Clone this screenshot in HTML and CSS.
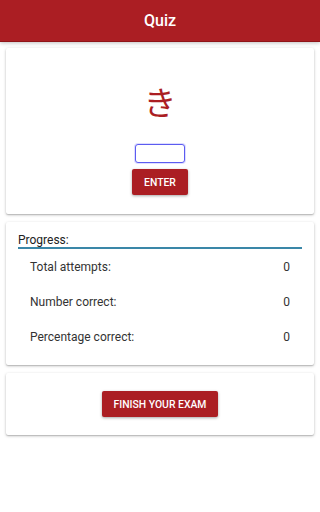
FILE: index.html
```html
<!DOCTYPE html>
<html>
<head>
<meta charset="utf-8">
<meta name="viewport" content="width=device-width, initial-scale=1">
<link rel="stylesheet" href="styles.css">
</head>
<body>
<header class="topbar">Quiz</header>
<main class="content">
  <section class="card quiz-card">
    <div class="kana">き</div>
    <input class="answer" type="text">
    <button class="btn">ENTER</button>
  </section>
  <section class="card progress-card">
    <div class="progress-title">Progress:</div>
    <div class="stat-row"><span>Total attempts:</span><span>0</span></div>
    <div class="stat-row"><span>Number correct:</span><span>0</span></div>
    <div class="stat-row"><span>Percentage correct:</span><span>0</span></div>
  </section>
  <section class="card finish-card">
    <button class="btn">FINISH YOUR EXAM</button>
  </section>
</main>
</body>
</html>
```

FILE: styles.css
```css
* { box-sizing: border-box; }
body {
  margin: 0;
  background: #fff;
  font-family: Roboto, "Noto Sans", "Noto Sans CJK JP", sans-serif;
  color: #222;
}
.topbar {
  height: 41px;
  background: #ab1e23;
  color: #fff;
  font-size: 16px;
  font-weight: 500;
  display: flex;
  align-items: center;
  justify-content: center;
  box-shadow: 0 1px 0 #8f1418, 0 2px 4px rgba(0,0,0,0.25);
  position: relative;
}
.content {
  padding: 7px 6px;
  display: flex;
  flex-direction: column;
  gap: 8px;
}
.card {
  background: #fff;
  border-radius: 2px;
  box-shadow: 0 1px 3px rgba(0,0,0,0.25), 0 1px 1px rgba(0,0,0,0.12);
}
.quiz-card {
  height: 166px;
  display: flex;
  flex-direction: column;
  align-items: center;
  padding-top: 28px;
}
.kana {
  font-family: "Noto Sans CJK JP", sans-serif;
  font-size: 33px;
  line-height: 50px;
  color: #ab1e23;
}
.answer {
  margin-top: 18px;
  width: 50px;
  height: 19px;
  border: 1px solid #5c5cf0;
  border-radius: 3px;
  outline: none;
  padding: 0;
  box-shadow: 0 0 0 1px rgba(120,120,255,0.25);
}
.btn {
  background: #ab1e23;
  color: #fff;
  border: none;
  border-radius: 2px;
  font-family: Roboto, sans-serif;
  font-size: 10.4px;
  font-weight: 500;
  height: 26px;
  padding: 0 12px;
  box-shadow: 0 1px 3px rgba(0,0,0,0.35);
}
.quiz-card .btn { margin-top: 6px; }
.progress-card {
  height: 143px;
  padding: 12px 24px 0 12px;
}
.progress-title {
  font-size: 12px;
  line-height: 13px;
  color: #222;
  border-bottom: 2px solid #3a87a8;
  margin-right: -12px;
}
.stat-row {
  display: flex;
  justify-content: space-between;
  padding-left: 12px;
  font-size: 12px;
  color: #333;
  height: 35px;
  align-items: center;
}
.progress-card .stat-row:first-of-type { margin-top: 2px; }
.finish-card {
  height: 62px;
  display: flex;
  align-items: center;
  justify-content: center;
}
```
